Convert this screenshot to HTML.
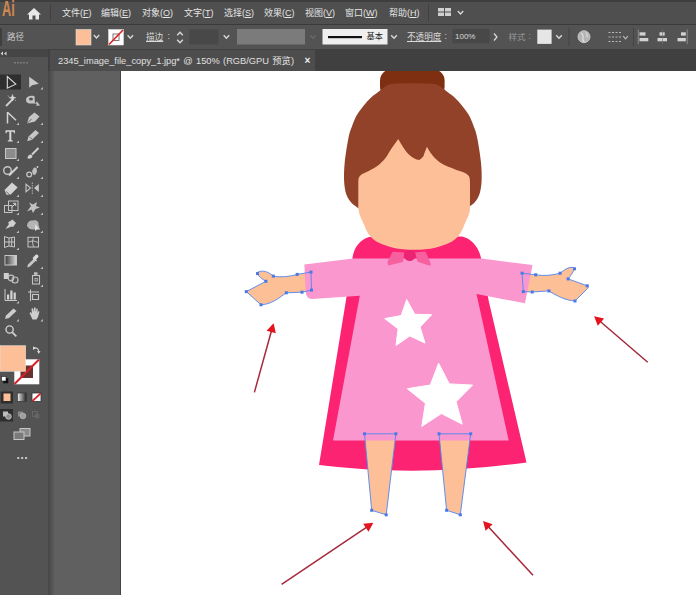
<!DOCTYPE html>
<html lang="zh-CN">
<head>
<meta charset="utf-8">
<title>Illustrator</title>
<style>
html,body{margin:0;padding:0;}
body{width:696px;height:595px;overflow:hidden;position:relative;background:#fff;
  font-family:"Liberation Sans","Noto Sans CJK SC",sans-serif;color:#dcdcdc;}
.abs{position:absolute;}
#menubar{left:0;top:0;width:696px;height:24px;background:#4f4f4f;}
#menubar .topline{left:0;top:0;width:696px;height:2px;background:#3e3e3e;}
#menusep{left:0;top:24px;width:696px;height:1px;background:#3a3a3a;}
#ctrlbar{left:0;top:25px;width:696px;height:24px;background:#535353;}
#tabbar{left:0;top:49px;width:696px;height:22.5px;background:#404040;}
#tab{left:50px;top:50px;width:265px;height:21px;background:#4d4d4d;}
#toolhead{left:0;top:49px;width:48px;height:8px;background:#454545;}
#toolbar{left:0;top:57px;width:48px;height:538px;background:#535353;}
#toolgap{left:48px;top:71px;width:6px;height:524px;background:linear-gradient(90deg,#474747,#4c4c4c 30%,#5c5c5c);}
#paste{left:54px;top:71px;width:67px;height:524px;background:#606060;border-right:1px solid #454545;box-sizing:border-box;}
#art{left:121px;top:71px;width:575px;height:524px;background:#fff;}
.mi{position:absolute;top:6px;font-size:9px;line-height:14px;color:#e4e4e4;white-space:nowrap;letter-spacing:0;}
.mi u{text-decoration:underline;}
.ct{position:absolute;font-size:8.6px;line-height:14px;color:#dadada;white-space:nowrap;}
</style>
</head>
<body>
<div id="menubar" class="abs"><div class="abs topline"></div></div>
<div id="menusep" class="abs"></div>
<div id="ctrlbar" class="abs"></div>
<div id="tabbar" class="abs"></div>
<div id="tab" class="abs"></div>
<div id="toolhead" class="abs"></div>
<div id="toolbar" class="abs"></div>
<div id="toolgap" class="abs"></div>
<div id="paste" class="abs"></div>
<div id="art" class="abs"></div>

<!-- CHROME ICONS SVG -->
<svg class="abs" id="chrome" style="left:0;top:0" width="696" height="595" viewBox="0 0 696 595">
<defs><linearGradient id="tg" x1="0" x2="1" y1="0" y2="0"><stop offset="0" stop-color="#3c3c3c"/><stop offset="1" stop-color="#d8d8d8"/></linearGradient><linearGradient id="tg2" x1="0" x2="1" y1="0" y2="0"><stop offset="0" stop-color="#f4f4f4"/><stop offset="1" stop-color="#222"/></linearGradient></defs>
<!-- toolbar header -->
<path d="M0.500,53.500 L3,51.500 L3,55.500 Z M4,53.500 L6.500,51.500 L6.500,55.500 Z" fill="#d0d0d0"/>
<g fill="#7a7a7a"><rect x="14" y="62" width="2" height="1.500"/><rect x="17" y="62" width="2" height="1.500"/><rect x="20" y="62" width="2" height="1.500"/><rect x="23" y="62" width="2" height="1.500"/><rect x="26" y="62" width="2" height="1.500"/></g>
<!-- row1 -->
<rect x="0" y="74.500" width="21" height="15" fill="#2f2f2f"/>
<path d="M7.300,76.500 L7.300,88.200 L15.800,84.200 Z" fill="#2f2f2f" stroke="#dcdcdc" stroke-width="1.100" stroke-linejoin="miter"/>
<path d="M29.200,76.800 L29.200,87.800 L32,85.300 L38.800,83.800 Z" fill="#c9c9c9"/>
<path d="M43.0,89.5 L40.4,89.5 L43.0,86.9 Z" fill="#bdbdbd"/>
<!-- row2 wand / lasso -->
<line x1="6" y1="106" x2="13.500" y2="98.500" stroke="#cfcfcf" stroke-width="1.800"/>
<path d="M12.500,94.500 L13.300,97 L15.800,97.800 L13.300,98.600 L12.500,101 L11.700,98.600 L9.200,97.800 L11.700,97 Z M8,95.500 L9,97 M16,101 L15,100" fill="#d8d8d8" stroke="#d8d8d8" stroke-width="0.500"/>
<path d="M26,100 C26,96.500 30,95.500 33,95.800 C34.500,96 35,97 34.600,98 L35,103.500 L37,101.500 L40,105.500 L36,105.800 L37,103.800 L33,103.500 C29,104 26,103 26,100 Z M29,99 a2,1.500 0 1,0 4,0 a2,1.500 0 1,0 -4,0" fill="#c4c4c4" fill-rule="evenodd"/>
<!-- row3 pen / curvature -->
<path d="M7.500,112 L7.500,123.500 M7.500,112.300 L16,120.300" stroke="#d4d4d4" stroke-width="1.500" fill="none"/>
<path d="M19.0,125.0 L16.4,125.0 L19.0,122.4 Z" fill="#bdbdbd"/>
<path d="M27,123.500 L29,117 L34.500,112.500 L39.500,116.500 L35,121.500 Z" fill="#c6c6c6"/>
<path d="M27,123.500 L31.500,119" stroke="#535353" stroke-width="0.800"/>
<path d="M43.0,125.0 L40.4,125.0 L43.0,122.4 Z" fill="#bdbdbd"/>
<!-- row4 type / pencil -->
<path d="M5.500,130.300 L15,130.300 L15,133.300 L14,133.300 L13.500,131.800 L11.300,131.800 L11.300,140 L12.800,140.600 L12.800,141.500 L7.800,141.500 L7.800,140.600 L9.300,140 L9.300,131.800 L7,131.800 L6.500,133.300 L5.500,133.300 Z" fill="#d6d6d6"/>
<path d="M19.0,143.0 L16.4,143.0 L19.0,140.4 Z" fill="#bdbdbd"/>
<path d="M27.200,141.300 L28.500,136.500 L35.500,130 L39,133 L32,139.800 Z" fill="#c6c6c6"/>
<path d="M29.500,137 L32,139" stroke="#535353" stroke-width="0.700"/>
<path d="M43.0,143.0 L40.4,143.0 L43.0,140.4 Z" fill="#bdbdbd"/>
<!-- row5 rect / brush -->
<rect x="5.500" y="148.500" width="10.500" height="10" fill="#8c8c8c" stroke="#c8c8c8" stroke-width="1"/>
<path d="M19.0,161.0 L16.4,161.0 L19.0,158.4 Z" fill="#bdbdbd"/>
<path d="M27.500,158.500 C27.500,156 29,154.500 31,154.500 L32.500,156 C32.500,158 30,159 27.500,158.500 Z" fill="#d0d0d0"/>
<line x1="32" y1="154.500" x2="38.500" y2="148" stroke="#cfcfcf" stroke-width="2"/>
<path d="M43.0,161.0 L40.4,161.0 L43.0,158.4 Z" fill="#bdbdbd"/>
<!-- row6 shaper / eraser-ish -->
<circle cx="7.500" cy="170.500" r="3.800" fill="none" stroke="#c8c8c8" stroke-width="1.400"/>
<line x1="9" y1="175.500" x2="17.500" y2="167" stroke="#d2d2d2" stroke-width="2"/>
<path d="M19.0,179.0 L16.4,179.0 L19.0,176.4 Z" fill="#bdbdbd"/>
<circle cx="29.200" cy="174.500" r="2.400" fill="none" stroke="#c4c4c4" stroke-width="1.300"/>
<path d="M32,171 L34,167.500 L36.500,168 L37,172 L35,175 L33,174.500 Z" fill="#bebebe"/>
<circle cx="37.500" cy="167" r="0.900" fill="#d0d0d0"/>
<path d="M43.0,179.0 L40.4,179.0 L43.0,176.4 Z" fill="#bdbdbd"/>
<!-- row7 eraser / reflect -->
<path d="M4.500,190 L12,182.500 L17.600,187.500 L10.500,194.800 L6.500,194.800 Z" fill="#d2d2d2"/>
<path d="M6,191.500 L10,195" stroke="#535353" stroke-width="0.800"/>
<path d="M19.0,197.0 L16.4,197.0 L19.0,194.4 Z" fill="#bdbdbd"/>
<path d="M26,184.200 L30.500,188 L26,191.800 Z" fill="none" stroke="#c8c8c8" stroke-width="1.100"/>
<line x1="32.300" y1="182.500" x2="32.300" y2="194" stroke="#bdbdbd" stroke-width="0.900" stroke-dasharray="1.500,1"/>
<path d="M38.800,184 L34,188 L38.800,192 Z" fill="#c8c8c8"/>
<path d="M43.0,197.0 L40.4,197.0 L43.0,194.4 Z" fill="#bdbdbd"/>
<!-- row8 scale / puppet -->
<rect x="4.500" y="205.500" width="7.500" height="7" fill="none" stroke="#c4c4c4" stroke-width="1"/>
<rect x="8.500" y="201" width="9.500" height="9.500" fill="none" stroke="#c4c4c4" stroke-width="1"/>
<path d="M11.500,207.500 L15.500,203.500 M13,203.300 L15.700,203.300 L15.700,206" stroke="#d0d0d0" stroke-width="1" fill="none"/>
<path d="M19.0,215.0 L16.4,215.0 L19.0,212.4 Z" fill="#bdbdbd"/>
<path d="M27,211.500 L31,206 L29,202.500 L33,204.500 L37,202 L36,206 L40,207.500 L35.500,209 L33,213 L31.500,209.500 Z" fill="#c2c2c2"/>
<path d="M43.0,215.0 L40.4,215.0 L43.0,212.4 Z" fill="#bdbdbd"/>
<!-- row9 pin / shape builder -->
<path d="M5.500,229 L9,224 L8,222.500 L12.500,219.500 L16,223 L13,227 L11.500,226.500 Z" fill="#cfcfcf"/>
<path d="M19.0,233.0 L16.4,233.0 L19.0,230.4 Z" fill="#bdbdbd"/>
<path d="M27,226 C27,222 30,220 33,220.500 C36,219.500 39,221.500 38.500,224.500 L40,230 L36.500,228 C34,230.500 29,230 27,226 Z" fill="#b4b4b4"/>
<path d="M35,224 L35,231 L37,229.500 L39.500,229.500 Z" fill="#e0e0e0"/>
<path d="M43.0,233.0 L40.4,233.0 L43.0,230.4 Z" fill="#bdbdbd"/>
<!-- row10 perspective / mesh -->
<path d="M4.500,236.500 L9,238 L9,246 L4.500,247.500 Z M9,238 L14.500,237 L14.500,247 L9,246 M11.700,237.500 L11.700,246.500 M4.500,242 L14.500,242" fill="none" stroke="#c6c6c6" stroke-width="1"/>
<path d="M19.0,250.0 L16.4,250.0 L19.0,247.4 Z" fill="#bdbdbd"/>
<rect x="28" y="237.300" width="10.500" height="9.700" fill="none" stroke="#c6c6c6" stroke-width="1"/>
<path d="M28,242 Q33,239.500 38.500,242.500 M33.300,237.300 Q31.500,242 33.500,247" fill="none" stroke="#c6c6c6" stroke-width="0.900"/>
<!-- row11 gradient / eyedropper -->
<rect x="5" y="255.500" width="11.500" height="9.500" fill="url(#tg)" stroke="#c8c8c8" stroke-width="1"/>
<path d="M27.200,267.500 L28,264.500 L34,258.500 L36,260.500 L30,266.500 Z" fill="#c6c6c6"/>
<path d="M33.500,257 L35.500,255 C37,253.500 39.500,256 38,257.500 L36,259.500 L37,260.500 L36,261.500 L32.500,258 L33.500,257 Z" fill="#dadada"/>
<path d="M43.0,269.0 L40.4,269.0 L43.0,266.4 Z" fill="#bdbdbd"/>
<!-- row12 blend / symbol sprayer -->
<rect x="3.800" y="273" width="5" height="6" fill="#cfcfcf"/>
<circle cx="11" cy="278" r="2.800" fill="none" stroke="#c2c2c2" stroke-width="1.200"/>
<circle cx="15" cy="280" r="3" fill="none" stroke="#c2c2c2" stroke-width="1.200"/>
<rect x="34" y="272.300" width="3.500" height="2.500" fill="#c4c4c4"/>
<rect x="32.500" y="275.500" width="7" height="8.500" fill="none" stroke="#c4c4c4" stroke-width="1.100"/>
<rect x="35" y="278.500" width="2.300" height="2.500" fill="none" stroke="#c4c4c4" stroke-width="0.800"/>
<path d="M43.0,287.0 L40.4,287.0 L43.0,284.4 Z" fill="#bdbdbd"/>
<!-- row13 graph / artboard -->
<path d="M5,289 L5,300.500 L17,300.500" fill="none" stroke="#c8c8c8" stroke-width="1"/>
<rect x="7" y="294.500" width="2.200" height="5" fill="#d4d4d4"/><rect x="10.300" y="290.500" width="2.200" height="9" fill="#d4d4d4"/><rect x="13.600" y="292.500" width="2.200" height="7" fill="#d4d4d4"/>
<path d="M19.0,303.5 L16.4,303.5 L19.0,300.9 Z" fill="#bdbdbd"/>
<path d="M30.500,289.500 L30.500,301 M28,292 L39,292 M32.500,294.500 L38.500,294.500 L38.500,299.500 L32.500,299.500 Z" fill="none" stroke="#c6c6c6" stroke-width="1.100"/>
<!-- row14 slice / hand -->
<path d="M5,319 L6,315.500 L13.500,308.500 L16.500,311 L9,318 Z" fill="#cccccc"/>
<path d="M19.0,321.5 L16.4,321.5 L19.0,318.9 Z" fill="#bdbdbd"/>
<path d="M29.500,313 L31,312 L32,314 L31.500,308.500 L33,308.300 L33.800,312 L34,307.500 L35.500,307.500 L35.800,312 L36.500,308.500 L37.800,308.800 L37.500,313 L38.500,311 L39.500,311.500 L38,317 L36.500,319.500 L32.500,319.500 Z" fill="#cfcfcf"/>
<path d="M43.0,321.5 L40.4,321.5 L43.0,318.9 Z" fill="#bdbdbd"/>
<!-- row15 zoom -->
<circle cx="9.600" cy="329.500" r="3.600" fill="none" stroke="#d0d0d0" stroke-width="1.400"/>
<line x1="12.300" y1="332.300" x2="16.300" y2="336.300" stroke="#d0d0d0" stroke-width="1.800"/>
<!-- swatches -->
<rect x="14.300" y="359.300" width="25" height="25" fill="#ffffff"/>
<rect x="20.500" y="365.500" width="12.500" height="12.500" fill="#6a3030"/>
<line x1="14.500" y1="384" x2="39" y2="359.500" stroke="#d61f26" stroke-width="2"/>
<rect x="0" y="345.700" width="25.700" height="25.600" fill="#fcbf98" stroke="#e8e8e8" stroke-width="0.500"/>
<path d="M34,348 Q38.500,347 38.800,352" fill="none" stroke="#c8c8c8" stroke-width="1.200"/>
<path d="M33,346.300 L33,350 L36,348.300 Z M37,351 L40.500,351 L38.800,354 Z" fill="#d6d6d6"/>
<rect x="3.500" y="378.500" width="4.500" height="4.500" fill="#111" stroke="#111" stroke-width="0.500"/>
<rect x="1.500" y="376.500" width="4.500" height="4.500" fill="#ffffff" stroke="#222" stroke-width="0.600"/>
<!-- color/gradient/none -->
<rect x="0.700" y="391.500" width="12.300" height="12" fill="#2e2e2e"/>
<rect x="3.500" y="393.500" width="7" height="7.500" fill="#fcbf98"/>
<rect x="17.300" y="393" width="9" height="8.500" fill="url(#tg2)" stroke="#3a3a3a" stroke-width="0.800"/>
<rect x="32" y="393" width="9" height="8.500" fill="#ffffff" stroke="#333" stroke-width="0.800"/>
<line x1="32.300" y1="401.200" x2="40.700" y2="393.300" stroke="#d61f26" stroke-width="1.800"/>
<!-- draw modes -->
<rect x="0" y="409" width="13" height="12.500" fill="#2e2e2e"/>
<rect x="3" y="411.500" width="5" height="5" fill="#bdbdbd"/><circle cx="8.500" cy="416.500" r="2.800" fill="#8e8e8e" stroke="#d0d0d0" stroke-width="0.800"/>
<rect x="18" y="411.500" width="5" height="5" fill="#8a8a8a"/><circle cx="23" cy="416" r="2.800" fill="#9e9e9e" stroke="#b8b8b8" stroke-width="0.800"/>
<rect x="32.500" y="411.500" width="5" height="5" fill="none" stroke="#6c6c6c" stroke-width="0.800"/><circle cx="37" cy="416" r="2.500" fill="#666"/>
<!-- screen mode -->
<rect x="20" y="428.500" width="10" height="7.500" fill="#8a8a8a" stroke="#c6c6c6" stroke-width="1"/>
<rect x="14" y="432" width="10" height="7.500" fill="#7a7a7a" stroke="#c6c6c6" stroke-width="1"/>
<!-- dots -->
<rect x="17.300" y="457" width="2" height="2" fill="#c8c8c8"/><rect x="21.200" y="457" width="2" height="2" fill="#c8c8c8"/><rect x="25.100" y="457" width="2" height="2" fill="#c8c8c8"/>
<!-- home icon -->
<path d="M34,8 L27,14.500 L29,14.500 L29,19.500 L32.500,19.500 L32.500,15.500 L35.500,15.500 L35.500,19.500 L39,19.500 L39,14.500 L41,14.500 Z" fill="#e8e8e8"/>
<rect x="50" y="4" width="1" height="17" fill="#404040"/>
<rect x="428" y="4" width="1" height="17" fill="#404040"/>
<!-- workspace icon -->
<rect x="438" y="8" width="6" height="3.500" fill="#d0d0d0"/><rect x="445" y="8" width="6" height="3.500" fill="#d0d0d0"/>
<rect x="438" y="12.500" width="6" height="3.500" fill="#d0d0d0"/><rect x="445" y="12.500" width="6" height="3.500" fill="#d0d0d0"/>
<path d="M457.8,11.0 L460.5,14.0 L463.2,11.0" fill="none" stroke="#d8d8d8" stroke-width="1.4"/>
<!-- ctrl bar left grip -->
<rect x="0" y="28" width="2" height="18" fill="#3f3f3f"/>
<!-- fill swatch -->
<rect x="76" y="29.500" width="15" height="15.500" fill="#fcbf98" stroke="#dcdcdc" stroke-width="0.6"/>
<path d="M93.8,35.0 L96.5,38.0 L99.2,35.0" fill="none" stroke="#d8d8d8" stroke-width="1.4"/>
<!-- stroke swatch -->
<rect x="108.500" y="29.500" width="15" height="15.500" fill="#ffffff" stroke="#dcdcdc" stroke-width="0.6"/>
<rect x="113" y="34" width="6" height="6.500" fill="none" stroke="#555" stroke-width="0.8"/>
<line x1="109" y1="44.500" x2="123" y2="30" stroke="#e02020" stroke-width="1.6"/>
<path d="M127.6,35.3 L130.3,38.3 L133.1,35.3" fill="none" stroke="#d8d8d8" stroke-width="1.4"/>
<!-- spinner -->
<path d="M177.2,35.3 L180.0,32.3 L182.8,35.3" fill="none" stroke="#d8d8d8" stroke-width="1.4"/><path d="M177.2,39.7 L180.0,42.7 L182.8,39.7" fill="none" stroke="#d8d8d8" stroke-width="1.4"/>
<rect x="189.300" y="29.500" width="29" height="15" fill="#484848"/>
<path d="M223.7,35.3 L226.4,38.3 L229.2,35.3" fill="none" stroke="#d8d8d8" stroke-width="1.4"/>
<rect x="237" y="29" width="68" height="15.500" fill="#7b7b7b"/>
<path d="M310.5,35.5 L313.0,38.1 L315.5,35.5" fill="none" stroke="#6d6d6d" stroke-width="1.2"/>
<rect x="322.500" y="29" width="65" height="15.500" fill="#efefef"/>
<rect x="328" y="36" width="34" height="2.200" fill="#111"/>
<path d="M391.2,35.3 L394.0,38.3 L396.8,35.3" fill="none" stroke="#d8d8d8" stroke-width="1.4"/>
<rect x="452.500" y="28.800" width="37" height="14.500" fill="#484848"/>
<path d="M494,33.500 L497,37 L494,40.500" fill="none" stroke="#d8d8d8" stroke-width="1.3"/>
<rect x="537.300" y="29.600" width="14.300" height="14.300" fill="#e6e6e6"/>
<path d="M556.2,35.3 L559.0,38.3 L561.8,35.3" fill="none" stroke="#d8d8d8" stroke-width="1.4"/>
<rect x="568.500" y="28" width="1" height="18" fill="#444"/>
<!-- globe -->
<circle cx="584" cy="36.700" r="6" fill="#b4b4b4" stroke="#d6d6d6" stroke-width="0.800"/>
<path d="M581,33 Q584,35 583,38 Q582,41 584.500,42 M586,32.500 Q588,35 587,37.500" stroke="#dedede" stroke-width="1.2" fill="none"/>
<!-- dotted rect -->
<path d="M608.500,32.500 H621 M608.500,37 H621 M608.500,41.500 H621" stroke="#b8b8b8" stroke-width="1.100" stroke-dasharray="2,1.500" fill="none"/>
<path d="M623.2,36.2 L625.5,38.8 L627.8,36.2" fill="none" stroke="#bdbdbd" stroke-width="1.1"/>
<rect x="633" y="28" width="1" height="18" fill="#444"/>
<!-- align icons -->
<g fill="#d2d2d2">
<rect x="639.500" y="32.300" width="6" height="3.300"/><rect x="639.500" y="38" width="8.800" height="3.300"/>
<rect x="659.500" y="32.300" width="5.200" height="3.300"/><rect x="657.500" y="38" width="9.500" height="3.300"/>
<rect x="681" y="32.300" width="4.800" height="3.300"/><rect x="677.500" y="38" width="8.300" height="3.300"/>
</g>
<g fill="#8c8c8c"><rect x="637.800" y="29.500" width="1" height="14.500"/><rect x="686.700" y="29.500" width="1" height="14.500"/><rect x="662" y="29.500" width="0.600" height="14.500" fill="#707070"/></g>
</svg>

<!-- MENU TEXT -->
<div class="abs" style="left:1.5px;top:-2px;font-size:22px;line-height:22px;color:#d08850;font-weight:bold;transform-origin:0 0;transform:scaleX(0.58);">Ai</div>
<span class="mi" style="left:62px">文件(<u>F</u>)</span>
<span class="mi" style="left:101px">编辑(<u>E</u>)</span>
<span class="mi" style="left:142px">对象(<u>O</u>)</span>
<span class="mi" style="left:184px">文字(<u>T</u>)</span>
<span class="mi" style="left:224px">选择(<u>S</u>)</span>
<span class="mi" style="left:264px">效果(<u>C</u>)</span>
<span class="mi" style="left:305px">视图(<u>V</u>)</span>
<span class="mi" style="left:345px">窗口(<u>W</u>)</span>
<span class="mi" style="left:389px">帮助(<u>H</u>)</span>

<!-- CONTROL BAR -->
<span class="ct" style="left:7px;top:30px;font-size:8.6px;color:#c8c8c8;">路径</span>
<span class="ct" style="left:146px;top:30px;text-decoration:underline;">描边</span>
<span class="ct" style="left:167.5px;top:29px;">:</span>
<span class="ct" style="left:366.5px;top:30px;color:#222;font-size:8.2px;">基本</span>
<span class="ct" style="left:407px;top:30px;text-decoration:underline;">不透明度</span>
<span class="ct" style="left:444.5px;top:29px;">:</span>
<span class="ct" style="left:455px;top:29.5px;font-size:8px;">100%</span>
<span class="ct" style="left:508.5px;top:30px;color:#9a9a9a;font-size:8.5px;">样式</span>
<span class="ct" style="left:528.5px;top:29px;color:#9a9a9a;">:</span>

<!-- TAB TEXT -->
<span class="abs" style="left:58px;top:54px;font-size:9.3px;word-spacing:0.7px;line-height:14px;color:#e0e0e0;white-space:nowrap;">2345_image_file_copy_1.jpg* @ 150% (RGB/GPU 预览)</span>
<span class="abs" style="left:304.5px;top:53.5px;font-size:10px;line-height:14px;color:#f0f0f0;font-weight:bold;">×</span>


<!-- ARTWORK SVG -->
<svg class="abs" id="artsvg" style="left:0;top:0" width="696" height="595" viewBox="0 0 696 595">
<defs><path id="lh" d="M311,272.1 L297.2,274.4 C289,276.6 281,277.6 273.3,276.1 C270,273 265,270.5 260.5,271.3 C258,271.8 257,272.6 257.5,273.6 C258.5,276.5 262,279 265.9,281.3 L246.300,291.600 L261,304.800 C271,304.500 279,298 286.300,292.800 L302,292.200 L311.500,290.100 Z"/><path id="rh" d="M522.1,273.2 L535.700,274.800 C544,276 552,275.500 560.100,273.200 C564,270 568,267.300 572,267.300 C574,267.500 575,268 574.500,268.800 C573,272.500 570.500,276 568.100,278.900 L587.200,285.800 C588.500,286.600 588.300,287.500 587.500,288.500 L575,301 C566,300.500 557,296 548.900,290.900 L532.200,292 L523.300,291.600 Z"/><clipPath id="cv"><rect x="121" y="71" width="575" height="524"/></clipPath></defs>
<g clip-path="url(#cv)">
  <!-- cape -->
  <path d="M369,237 C359,240 353.500,249 352.500,258 L346,300 L319,465 Q420,477.5 526.5,462.4 L488.500,300 L481,258 C478.500,246 471,238.500 462,236.400 Z" fill="#fb2372"/>
  <!-- legs -->
  <path d="M364.500,434 L396,434 L386.200,514.800 L371.700,510.300 Z" fill="#fcbf98"/>
  <path d="M439,434 L470.700,434 L460.300,514.800 L446.600,510.300 Z" fill="#fcbf98"/>

  <!-- hands (under sleeves) -->
  <use href="#lh" fill="#fcbf96"/>
  <use href="#rh" fill="#fcbf96"/>
  <!-- dress -->
  <path d="M304.4,264.4 L353,258.5 L481.4,258.6 L532.5,265 L525,303.3 L476.5,294 L508.7,440.4 L333,440.4 L359.8,295.7 L312,298.9 C308,299 306,296 305.6,291 L304.4,264.4 Z" fill="#fa97ce"/>
  <!-- bun -->
  <rect x="380" y="69.5" width="64.6" height="28" rx="11" ry="11" fill="#7e2f12"/>
  <!-- hair -->
  <path d="M412.7,83.3 C416.2,83.4 429.3,83.4 434.0,84.0 C438.7,84.6 439.0,85.8 441.0,87.0 C443.0,88.2 444.1,89.3 446.2,90.9 C448.3,92.5 451.2,94.5 453.5,96.5 C455.8,98.5 457.3,100.0 459.8,103.0 C462.3,106.0 466.2,110.7 468.5,114.5 C470.8,118.3 472.1,122.0 473.6,126.0 C475.1,130.0 476.1,132.2 477.3,138.3 C478.5,144.4 480.3,155.6 481.0,162.7 C481.7,169.8 481.8,175.8 481.6,181.0 C481.3,186.2 480.7,190.4 479.5,194.0 C478.3,197.6 476.6,200.2 474.5,202.6 C472.4,205.0 468.4,207.3 467.2,208.2 L358.3,208.2  C357.1,207.3 353.2,205.0 351.2,202.6 C349.2,200.2 347.4,197.6 346.2,194.0 C345.0,190.4 344.4,186.2 344.1,181.0 C343.9,175.8 344.0,169.8 344.7,162.7 C345.4,155.6 347.2,144.4 348.4,138.3 C349.6,132.2 350.6,130.0 352.1,126.0 C353.6,122.0 354.9,118.3 357.2,114.5 C359.5,110.7 363.4,106.0 365.9,103.0 C368.4,100.0 369.9,98.5 372.2,96.5 C374.5,94.5 377.4,92.5 379.5,90.9 C381.6,89.3 382.7,88.2 384.7,87.0 C386.7,85.8 387.0,84.6 391.7,84.0 C396.4,83.4 409.2,83.4 412.7,83.3 Z" fill="#914228"/>
  <!-- face -->
  <path d="M358.3,208.2 L358.3,185 C358.4,183.9 358.1,180.3 358.6,178.6 C359.1,176.9 359.5,176.1 361.2,174.8 C362.9,173.6 365.9,172.7 368.7,171.1 C371.5,169.5 375.2,167.7 378.0,165.5 C380.8,163.3 383.5,160.5 385.5,158.0 C387.5,155.5 388.1,153.7 390.2,150.5 C392.3,147.3 396.9,140.9 398.2,139.0 C399.2,140.6 402.3,146.0 404.2,148.7 C406.1,151.4 407.9,153.5 409.8,155.2 C411.7,156.9 413.8,158.2 415.4,159.0 C417.0,159.8 418.8,159.8 419.5,159.9 C420.1,159.4 421.9,158.3 422.8,157.1 C423.7,155.8 424.0,154.1 424.7,152.4 C425.4,150.7 426.6,147.7 427.0,146.8 C427.6,147.7 428.8,150.4 430.3,152.4 C431.8,154.4 433.7,157.0 435.9,159.0 C438.1,161.0 440.3,162.9 443.4,164.6 C446.5,166.3 451.2,167.9 454.6,169.2 C458.0,170.5 461.6,171.5 463.9,172.6 C466.2,173.7 467.6,174.7 468.6,175.8 C469.6,177.0 469.6,178.0 469.8,179.5 C470.0,181.0 470.0,184.1 470.0,185.0 C470.0,188.9 470.1,203.2 469.9,208.2 C469.7,213.2 469.3,212.7 468.6,215.0 C467.9,217.3 466.7,219.5 465.5,222.2 C464.3,224.8 462.9,228.5 461.6,230.9 C460.3,233.3 459.3,234.8 457.8,236.5 C456.3,238.2 454.8,239.8 452.5,241.2 C450.2,242.6 446.8,244.0 443.9,245.1 C441.0,246.2 438.4,247.0 435.3,247.7 C432.2,248.4 428.9,249.0 425.4,249.3 C421.9,249.7 417.9,249.8 414.2,249.8 C410.5,249.8 406.5,249.7 403.0,249.3 C399.5,249.0 396.2,248.4 393.1,247.7 C390.0,247.0 387.4,246.2 384.5,245.1 C381.6,244.0 378.2,242.6 375.9,241.2 C373.6,239.8 372.1,238.2 370.6,236.5 C369.1,234.8 368.1,233.3 366.8,230.9 C365.5,228.5 364.1,224.8 362.9,222.2 C361.7,219.5 360.6,217.3 359.8,215.0 C359.0,212.7 358.6,209.3 358.3,208.2 Z" fill="#fcbf98"/>
  <!-- bow -->
  <path d="M392.6,251.8 L404.2,252.6 L403,262 L388.3,265.4 L387.4,262 Z" fill="#f7609f"/>
  <path d="M415.2,252.6 L425.5,251.4 L431,264.2 L429.8,265.8 L417.5,261.7 Z" fill="#f7609f"/>
  <circle cx="409.700" cy="255.500" r="5.500" fill="#ea2474"/>
  <!-- stars -->
  <path d="M406.7,299.6 L414.8,314.3 L431.7,314.7 L420.1,327.0 L425.0,343.1 L409.8,335.9 L396.0,345.5 L398.1,328.8 L384.7,318.6 L401.2,315.5 Z" fill="#fff" stroke="#fff" stroke-width="1" stroke-linejoin="round"/>
  <path d="M438.6,363.2 L449.3,383.9 L472.6,385.1 L456.1,401.7 L462.2,424.2 L441.4,413.6 L421.8,426.4 L425.4,403.3 L407.3,388.7 L430.3,385.0 Z" fill="#fff" stroke="#fff" stroke-width="1" stroke-linejoin="round"/>

  <!-- arrows -->
  <line x1="254.4" y1="392.4" x2="271.7" y2="330.0" stroke="#a52a3c" stroke-width="1.500"/>
  <path d="M273.6,323.3 L275.8,333.3 L266.6,330.7 Z" fill="#e5121f"/>
  <line x1="647.7" y1="362.2" x2="599.4" y2="320.8" stroke="#a52a3c" stroke-width="1.500"/>
  <path d="M594.1,316.2 L604.1,318.4 L597.8,325.7 Z" fill="#e5121f"/>
  <line x1="281.6" y1="584.4" x2="367.5" y2="526.6" stroke="#a52a3c" stroke-width="1.500"/>
  <path d="M373.3,522.7 L368.5,531.7 L363.2,523.7 Z" fill="#e5121f"/>
  <line x1="533.0" y1="575.3" x2="487.7" y2="526.1" stroke="#a52a3c" stroke-width="1.500"/>
  <path d="M483.0,520.9 L492.6,524.3 L485.6,530.8 Z" fill="#e5121f"/>
  <!-- selection outlines -->
  <g fill="none" stroke="#4f86f0" stroke-width="0.9">
    <use href="#lh"/><use href="#rh"/>
    <path d="M364.500,433.800 L395.900,433.800 L386.200,514.800 L371.700,510.300 Z"/>
    <path d="M439,433.800 L470.700,433.800 L460.300,514.800 L446.600,510.300 Z"/>
  </g>
  <g fill="#4a78e8" id="anchors">
<rect x="309.5" y="270.6" width="3" height="3"/><rect x="295.7" y="272.9" width="3" height="3"/><rect x="271.8" y="274.6" width="3" height="3"/><rect x="256.0" y="272.1" width="3" height="3"/><rect x="264.4" y="279.8" width="3" height="3"/><rect x="244.8" y="290.1" width="3" height="3"/><rect x="259.5" y="303.3" width="3" height="3"/><rect x="284.8" y="291.3" width="3" height="3"/><rect x="300.5" y="290.7" width="3" height="3"/><rect x="310.0" y="288.6" width="3" height="3"/><rect x="520.6" y="271.7" width="3" height="3"/><rect x="534.2" y="273.3" width="3" height="3"/><rect x="558.6" y="271.7" width="3" height="3"/><rect x="573.0" y="267.3" width="3" height="3"/><rect x="566.6" y="277.4" width="3" height="3"/><rect x="585.7" y="284.3" width="3" height="3"/><rect x="573.5" y="299.5" width="3" height="3"/><rect x="547.4" y="289.4" width="3" height="3"/><rect x="530.7" y="290.5" width="3" height="3"/><rect x="521.8" y="290.1" width="3" height="3"/><rect x="363.0" y="432.3" width="3" height="3"/><rect x="394.4" y="432.3" width="3" height="3"/><rect x="384.7" y="513.3" width="3" height="3"/><rect x="370.2" y="508.8" width="3" height="3"/><rect x="437.5" y="432.3" width="3" height="3"/><rect x="469.2" y="432.3" width="3" height="3"/><rect x="458.8" y="513.3" width="3" height="3"/><rect x="445.1" y="508.8" width="3" height="3"/>
  </g>
</g>
</svg>
</body>
</html>
